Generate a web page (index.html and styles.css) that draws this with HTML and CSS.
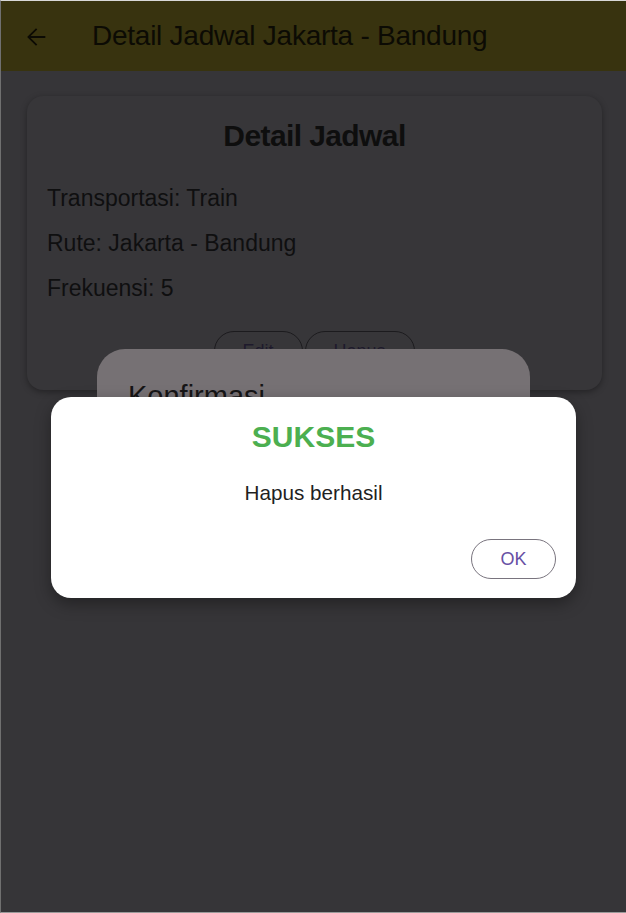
FILE: index.html
```html
<!DOCTYPE html>
<html>
<head>
<meta charset="utf-8">
<link rel="stylesheet" href="styles.css">
</head>
<body>
<div class="screen">
  <header class="appbar">
    <svg class="back" width="28" height="28" viewBox="0 0 24 24"><path d="M20 11.2H7.4l5.7-5.7L12 4.4l-7.6 7.6 7.6 7.6 1.1-1.1-5.7-5.7H20z" fill="#0c0b04"/></svg>
    <h1 class="appbar-title">Detail Jadwal Jakarta - Bandung</h1>
  </header>
  <main class="content">
    <section class="card">
      <h2 class="card-title">Detail Jadwal</h2>
      <p class="row">Transportasi: Train</p>
      <p class="row">Rute: Jakarta - Bandung</p>
      <p class="row">Frekuensi: 5</p>
      <div class="actions">
        <button class="btn btn-edit">Edit</button>
        <button class="btn btn-hapus">Hapus</button>
      </div>
    </section>
  </main>
  <div class="confirm">
    <div class="confirm-title">Konfirmasi</div>
  </div>
  <div class="success">
    <div class="success-title">SUKSES</div>
    <div class="success-msg">Hapus berhasil</div>
    <div class="success-actions">
      <button class="ok">OK</button>
    </div>
  </div>
</div>
</body>
</html>
```

FILE: styles.css
```css
html, body {
  margin: 0;
  padding: 0;
  background: #363538;
}
.screen {
  position: relative;
  width: 626px;
  height: 913px;
  box-sizing: border-box;
  border-top: 1px solid #d8d8d8;
  border-left: 1px solid #707070;
  border-bottom: 1px solid #9a9a9a;
  background: #363538;
  overflow: hidden;
  font-family: "Liberation Sans", Arial, sans-serif;
}
.appbar {
  height: 70px;
  background: #38330f;
  display: flex;
  align-items: center;
  padding-left: 21px;
}
.back {
  display: block;
  margin-top: 1px;
}
.appbar-title {
  margin: 0 0 0 42px;
  font-size: 28px;
  font-weight: normal;
  color: #0c0b04;
  letter-spacing: -0.25px;
}
.content {
  padding: 25px 24px 0 26px;
}
.card {
  background: #373639;
  border-radius: 16px;
  box-shadow: 0 2px 6px rgba(0,0,0,0.35);
  height: 294px;
  box-sizing: border-box;
  padding: 23px 20px 0 20px;
  overflow: hidden;
}
.card-title {
  margin: 0 0 32px;
  text-align: center;
  font-size: 30px;
  line-height: 34px;
  font-weight: bold;
  letter-spacing: -0.6px;
  color: #0e0e0e;
}
.row {
  margin: 0 0 19px;
  font-size: 23px;
  line-height: 26px;
  color: #0f0f10;
}
.actions {
  display: flex;
  justify-content: center;
  gap: 2px;
  margin-top: 30px;
  padding-right: 1px;
}
.btn {
  background: transparent;
  border: 1px solid #1c1b1e;
  border-radius: 20px;
  height: 40px;
  font-family: "Liberation Sans", Arial, sans-serif;
  font-size: 18px;
  color: #1e1a2c;
  padding: 0;
}
.btn-edit { width: 89px; }
.btn-hapus { width: 110px; }
.confirm {
  position: absolute;
  left: 96px;
  top: 348px;
  width: 433px;
  height: 200px;
  background: #767174;
  border-radius: 28px;
}
.confirm-title {
  padding: 30px 0 0 31px;
  font-size: 29px;
  line-height: 34px;
  color: #161516;
}
.success {
  position: absolute;
  left: 50px;
  top: 396px;
  width: 525px;
  height: 201px;
  background: #ffffff;
  border-radius: 20px;
  box-shadow: 0 6px 16px rgba(0,0,0,0.35);
  display: flex;
  flex-direction: column;
  align-items: center;
  box-sizing: border-box;
  padding-top: 23px;
}
.success-title {
  font-size: 30px;
  font-weight: bold;
  color: #4caf50;
  line-height: 34px;
}
.success-msg {
  margin-top: 27px;
  font-size: 20.7px;
  color: #1f1f1f;
  line-height: 24px;
}
.success-actions {
  align-self: stretch;
  display: flex;
  justify-content: flex-end;
  padding-right: 20px;
  margin-top: 34px;
}
.ok {
  width: 85px;
  height: 40px;
  border: 1px solid #79747e;
  border-radius: 20px;
  background: #fff;
  color: #6750a4;
  font-family: "Liberation Sans", Arial, sans-serif;
  font-size: 18px;
  padding: 0;
}
```
